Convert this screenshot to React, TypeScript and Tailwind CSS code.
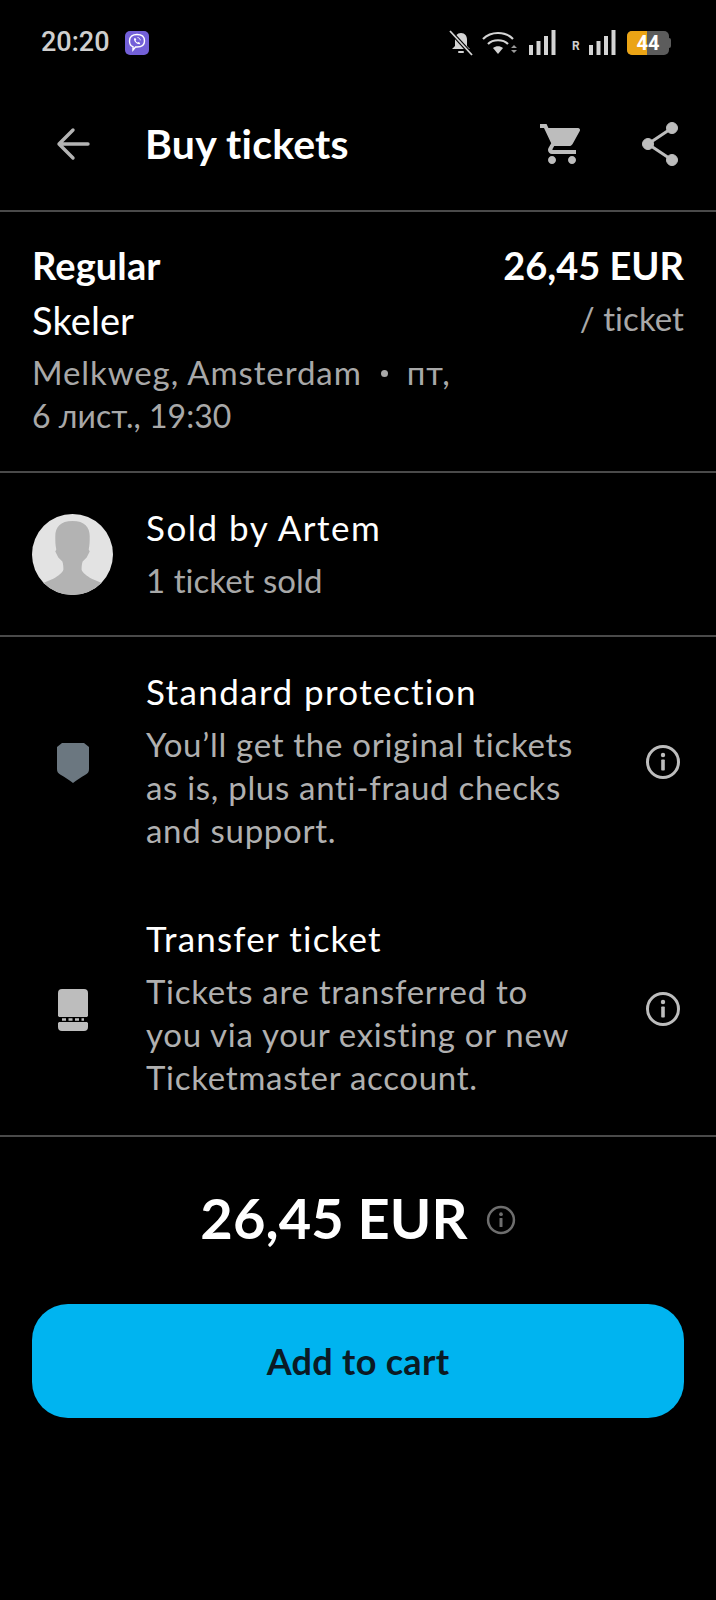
const font = "font-['Lato','Noto_Sans',sans-serif]";

function Bell() {
  return (
    <svg width="26" height="26" viewBox="0 0 26 26" className="mr-[8px]">
      <path d="M13 3c-4 0-6 3-6 7v6l-3 3h18l-3-3v-6c0-4-2-7-6-7z" fill="#d4d4d4" />
      <rect x="10" y="21" width="6" height="2" rx="1" fill="#d4d4d4" />
      <path d="M2 1l22 24" stroke="#000" strokeWidth="4" />
      <path d="M2 1l22 24" stroke="#d4d4d4" strokeWidth="1.8" />
    </svg>
  );
}

function Wifi() {
  return (
    <svg width="36" height="26" viewBox="0 0 36 26">
      <path d="M1 9c8-8 22-8 30 0" stroke="#d4d4d4" strokeWidth="2.2" fill="none" />
      <path d="M6 14c5-5 15-5 20 0" stroke="#d4d4d4" strokeWidth="2.2" fill="none" />
      <path d="M11 18c3-2.5 7-2.5 10 0l-5 6z" fill="#d4d4d4" />
      <path d="M29 18l3-3 3 3zM29 20h6l-3 3z" fill="#9a9a9a" />
    </svg>
  );
}

function Signal() {
  return (
    <svg width="27" height="25" viewBox="0 0 27 25">
      <rect x="0" y="15" width="4" height="10" fill="#d4d4d4" />
      <rect x="7.5" y="11" width="4" height="14" fill="#d4d4d4" />
      <rect x="15" y="6" width="4" height="19" fill="#d4d4d4" />
      <rect x="22.5" y="0" width="4" height="25" fill="#d4d4d4" />
    </svg>
  );
}

function Viber() {
  return (
    <div className="ml-[15px] flex h-[24px] w-[24px] items-center justify-center rounded-[5px] bg-[#7360d8]">
      <svg width="18" height="19" viewBox="0 0 18 19" fill="none">
        <path d="M9 1.5c4.5 0 7.5 2 7.5 6.5S13.500 14 9 14H7.500L5 17v-3.300C2.500 13 1.500 11 1.500 8 1.500 3.500 4.500 1.500 9 1.500z" stroke="#fff" strokeWidth="1.400" />
        <path d="M6 5.500l1.300-.5 1 1.800-.7.800c.4 1 1 1.600 2 2l.8-.7 1.800 1-.5 1.300c-3 .3-6-3-5.700-5.700z" fill="#fff" />
        <path d="M9.500 4.500c1.500.1 2.700 1.300 2.800 2.800" stroke="#fff" strokeWidth="0.900" />
      </svg>
    </div>
  );
}

function Info({ size = 36, color = "#bdbdbd" }: { size?: number; color?: string }) {
  return (
    <svg width={size} height={size} viewBox="0 0 36 36" fill="none">
      <circle cx="18" cy="18" r="15.500" stroke={color} strokeWidth="3" />
      <rect x="16.200" y="15.500" width="3.600" height="11" rx="0.800" fill={color} />
      <circle cx="18" cy="11" r="2.200" fill={color} />
    </svg>
  );
}

function Divider() {
  return <div className="h-[2px] bg-[#4a4a4a]" />;
}

function Feature({ icon, title, lines, titleTracking }: { icon: React.ReactNode; title: string; lines: string[]; titleTracking: string }) {
  return (
    <div className="flex items-center pl-[33px] pr-[35px]">
      <div className="flex w-[113px] shrink-0 items-center pl-[24px] pt-[4px]">{icon}</div>
      <div className="flex-1">
        <div className={`text-[35px] leading-[43px] text-white ${titleTracking}`}>{title}</div>
        <div className="mt-[10px] text-[33px] leading-[43px] tracking-[0.7px] text-[#b0b0b0]">
          {lines.map((l) => (
            <div key={l}>{l}</div>
          ))}
        </div>
      </div>
      <div className="pt-[2px]">
        <Info />
      </div>
    </div>
  );
}

export default function App() {
  return (
    <div className={`${font} flex h-[1600px] w-[716px] flex-col overflow-hidden bg-black tracking-[0.3px]`}>
      <div className="flex h-[86px] items-center pb-[1px] pl-[41px] pr-[45px]">
        <span className="font-['Roboto',sans-serif] text-[27px] font-medium tracking-normal text-[#cfcfcf]">20:20</span>
        <Viber />
        <div className="ml-auto flex items-center">
          <Bell />
          <Wifi />
          <div className="ml-[11px]"><Signal /></div>
          <span className="ml-[16px] mt-[6px] font-['Roboto',sans-serif] text-[12px] font-bold text-[#cfcfcf]">R</span>
          <div className="ml-[9px]"><Signal /></div>
          <div className="relative ml-[11px] flex h-[24px] w-[42px] overflow-hidden rounded-[5px] bg-[#5c5c5c]">
            <div className="h-full w-[20px] bg-[#eba415]" />
            <span className="absolute inset-0 text-center font-['Roboto',sans-serif] text-[20px] font-bold leading-[24px] tracking-normal text-white">44</span>
          </div>
          <div className="h-[10px] w-[2px] rounded-r bg-[#5c5c5c]" />
        </div>
      </div>

      <div className="flex h-[124px] items-center pb-[9px] pl-[55px] pr-[32px]">
        <svg width="36" height="36" viewBox="0 0 36 36" fill="none" stroke="#b4b4b4" strokeWidth="3.400" strokeLinecap="round" strokeLinejoin="round">
          <path d="M33 18H4M18 4L4 18l14 14" />
        </svg>
        <div className="ml-[54px] flex-1 text-[41px] font-bold leading-none tracking-[0.2px] text-white">Buy tickets</div>
        <svg width="48" height="48" viewBox="0 0 24 24" fill="#bdbdbd" className="mr-[54px]">
          <path d="M7 18c-1.100 0-1.990.9-1.990 2S5.900 22 7 22s2-.9 2-2-.9-2-2-2zM1 2v2h2l3.600 7.590-1.350 2.450c-.16.28-.25.61-.25.96 0 1.100.9 2 2 2h12v-2H7.420c-.14 0-.25-.11-.25-.25l.03-.12.9-1.630h7.450c.75 0 1.410-.41 1.750-1.030l3.580-6.490A1 1 0 0 0 20 4H5.210l-.94-2H1zm16 16c-1.100 0-1.990.9-1.990 2s.89 2 1.990 2 2-.9 2-2-.9-2-2-2z" />
        </svg>
        <svg width="44" height="46" viewBox="0 0 44 46" fill="#bdbdbd" stroke="#bdbdbd">
          <circle cx="32" cy="7" r="5.500" />
          <circle cx="8" cy="23" r="5.500" />
          <circle cx="32" cy="39" r="5.500" />
          <path d="M32 7L8 23l24 16" fill="none" strokeWidth="3" />
        </svg>
      </div>
      <Divider />

      <div className="flex justify-between px-[32px] pb-[34px] pt-[31px]">
        <div>
          <div className="text-[38px] font-bold leading-[44px] tracking-[0.1px] text-white">Regular</div>
          <div className="mt-[11px] text-[38px] leading-[44px] tracking-[0.1px] text-white">Skeler</div>
          <div className="mt-[10px] text-[33px] tracking-[0.9px] text-[#a8a8a8]">
            <div className="flex h-[42px] items-center">
              <span>Melkweg, Amsterdam</span>
              <span className="mx-[19px] h-[7px] w-[7px] rounded-full bg-[#a8a8a8]" />
              <span>пт,</span>
            </div>
            <div className="mt-[1px] text-[32px] leading-[42px] tracking-[0]">6 лист., 19:30</div>
          </div>
        </div>
        <div className="text-right">
          <div className="text-[38px] font-bold leading-[44px] tracking-[0] text-white">26,45 EUR</div>
          <div className="mt-[9px] text-[33px] leading-[44px] tracking-[0.05px] text-[#a8a8a8]">/ ticket</div>
        </div>
      </div>
      <Divider />

      <div className="flex h-[162px] items-center pl-[32px]">
        <svg width="81" height="81" viewBox="0 0 80 80">
          <defs>
            <clipPath id="avatarClip"><circle cx="40" cy="40" r="40" /></clipPath>
          </defs>
          <circle cx="40" cy="40" r="40" fill="#e3e3e3" />
          <g clipPath="url(#avatarClip)" fill="#b3b3b3">
            <path d="M40 7c-12 0-17 6-17 15 0 5 0 9 1 13l-1 2 3 6 4 4c1 3 1 6 1 8-1 3-5 6-10 9l-7 3-7 3v10h66V70l-7-3-7-3c-5-3-9-6-10-9 0-2 0-5 1-8l4-4 3-6-1-2c1-4 1-8 1-13 0-9-5-15-17-15z" />
          </g>
        </svg>
        <div className="ml-[33px] mt-[-1px]">
          <div className="text-[35px] leading-[43px] tracking-[1.5px] text-white">Sold by Artem</div>
          <div className="mt-[10px] text-[33px] leading-[43px] tracking-[0.05px] text-[#a8a8a8]">1 ticket sold</div>
        </div>
      </div>
      <Divider />

      <div className="flex flex-col gap-[65px] pt-[33px]">
        <Feature
          title="Standard protection"
          titleTracking="tracking-[1.4px]"
          lines={["You’ll get the original tickets", "as is, plus anti-fraud checks", "and support."]}
          icon={
            <svg width="32" height="40" viewBox="0 0 32 40">
              <path d="M5 0h22l5 4v22c0 3-1 4-4 6-4 2-8 5-12 8-4-3-8-6-12-8-3-2-4-3-4-6V4z" fill="#6b7780" />
            </svg>
          }
        />
        <Feature
          title="Transfer ticket"
          titleTracking="tracking-[1.2px]"
          lines={["Tickets are transferred to", "you via your existing or new", "Ticketmaster account."]}
          icon={
            <svg width="30" height="42" viewBox="0 0 30 42" className="ml-[1px]">
              <path d="M4 0h22a4 4 0 0 1 4 4v23a2 2 0 0 0-1 1H1a2 2 0 0 0-1-1V4a4 4 0 0 1 4-4z" fill="#bdbdbd" />
              <path d="M1 33h28a2 2 0 0 0 1 1v4a4 4 0 0 1-4 4H4a4 4 0 0 1-4-4v-4a2 2 0 0 0 1-1z" fill="#bdbdbd" />
              <path d="M4 30.500h22" stroke="#bdbdbd" strokeWidth="2.400" strokeDasharray="4 2.500" />
            </svg>
          }
        />
      </div>
      <div className="mt-[36px]"><Divider /></div>

      <div className="mt-[47px] flex items-center justify-center">
        <span className="text-[56px] font-bold leading-[68px] tracking-[0.1px] text-white">26,45 EUR</span>
        <div className="ml-[18px] mt-[4px]">
          <Info size={30} color="#6e6e6e" />
        </div>
      </div>

      <div className="mx-[32px] mt-[52px] flex h-[114px] items-center justify-center rounded-[36px] bg-[#00b4f0] text-[36px] font-bold text-[#0b1a24]">
        Add to cart
      </div>
    </div>
  );
}
